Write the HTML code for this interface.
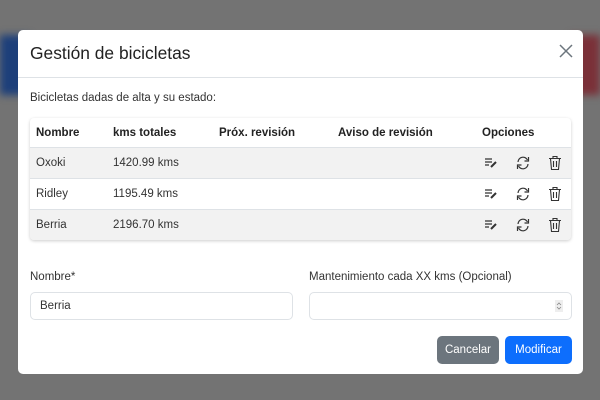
<!DOCTYPE html>
<html><head><meta charset="utf-8"><style>
*{box-sizing:border-box;margin:0;padding:0}
body{width:600px;height:400px;overflow:hidden;background:#737373;font-family:"Liberation Sans",sans-serif;color:#333;position:relative}
.bl{position:absolute;left:0;top:35px;width:30px;height:60px;background:#1d3f7a;filter:blur(4px)}
.rd{position:absolute;right:0;top:35px;width:30px;height:60px;background:#7a3038;filter:blur(4px)}
.modal{position:absolute;left:18px;top:30px;width:565px;height:344px;background:#fff;border-radius:5px}
.hd{height:48px;border-bottom:1px solid #dee2e6;position:relative}
.hd h1{position:absolute;left:12px;top:13px;font-size:17.4px;font-weight:normal;color:#222}
.x{position:absolute;right:10px;top:14px}
.sub{position:absolute;left:12px;top:62px;font-size:11.5px}
.tbl{position:absolute;left:12px;top:88px;width:541px;border-radius:4px;box-shadow:0 1px 3px rgba(0,0,0,.2);overflow:hidden;font-size:11.5px}
.r{height:31px;position:relative;border-top:1px solid #dee2e6}
.r:first-child{height:29px;border-top:none}
.g{background:#f2f2f2}
.r span{position:absolute;top:9px}
.th span{font-weight:bold;color:#222}
.lbl{position:absolute;font-size:11.5px;top:241px}
.in{position:absolute;top:262px;height:28px;border:1px solid #dee2e6;border-radius:5px;font-size:11.5px;padding:7px 9px}
.btn{position:absolute;top:306px;height:28px;border-radius:5px;color:#fff;font-size:11.5px;text-align:center;line-height:28px}
.ic{position:absolute;top:7px}
</style></head><body>
<div class="bl"></div><div class="rd"></div>
<div class="modal">
<div class="hd"><h1>Gestión de bicicletas</h1>
<svg class="x" width="14" height="14" viewBox="0 0 14 14"><path d="M1 1L13 13M13 1L1 13" stroke="#6c757d" stroke-width="1.5"/></svg></div>
<div class="sub">Bicicletas dadas de alta y su estado:</div>
<div class="tbl">
<div class="r th"><span style="left:6px">Nombre</span><span style="left:83px">kms totales</span><span style="left:189px">Próx. revisión</span><span style="left:308px">Aviso de revisión</span><span style="left:452px">Opciones</span></div>
<div class="r g"><span style="left:6px">Oxoki</span><span style="left:83px">1420.99 kms</span>ICONS</div>
<div class="r"><span style="left:6px">Ridley</span><span style="left:83px">1195.49 kms</span>ICONS</div>
<div class="r g"><span style="left:6px">Berria</span><span style="left:83px">2196.70 kms</span>ICONS</div>
</div>
<div class="lbl" style="left:12px">Nombre*</div>
<div class="lbl" style="left:291px">Mantenimiento cada XX kms (Opcional)</div>
<div class="in" style="left:12px;width:263px">Berria</div>
<div class="in" style="left:291px;width:263px"><svg style="position:absolute;right:8px;top:7px" width="8" height="12" viewBox="0 0 8 12"><rect width="8" height="12" fill="#eee"/><path d="M2 5L4 3L6 5M2 7L4 9L6 7" stroke="#888" fill="none" stroke-width=".8"/></svg></div>
<div class="btn" style="left:419px;width:62px;background:#6c757d">Cancelar</div>
<div class="btn" style="left:487px;width:67px;background:#0d6efd">Modificar</div>
</div>
<script>
var ic='<svg class="ic" style="left:454px" width="14" height="14" viewBox="0 0 14 14"><path d="M1 4H8M1 7H8M1 10H5" stroke="#333" stroke-width="1.3"/><path d="M7 12L12 7" stroke="#333" stroke-width="2"/></svg>'+
'<svg class="ic" style="left:485px" width="16" height="16" viewBox="0 0 16 16"><path d="M3 7A5 5 0 0 1 12.5 5M13 9A5 5 0 0 1 3.5 11" stroke="#333" stroke-width="1.2" fill="none"/><path d="M13.5 2V6H9.5M2.5 14V10H6.5" stroke="#333" stroke-width="1.2" fill="none"/></svg>'+
'<svg class="ic" style="left:518px" width="14" height="16" viewBox="0 0 14 16"><path d="M1 3.5H13M5 3.5V1.5H9V3.5M2.5 3.5L3.5 14.5H10.5L11.5 3.5M5.5 6V12M8.5 6V12" stroke="#333" stroke-width="1.1" fill="none"/></svg>';
document.querySelectorAll('.r').forEach(function(r,i){if(i>0)r.innerHTML=r.innerHTML.replace('ICONS',ic);});
</script>
</body></html>
